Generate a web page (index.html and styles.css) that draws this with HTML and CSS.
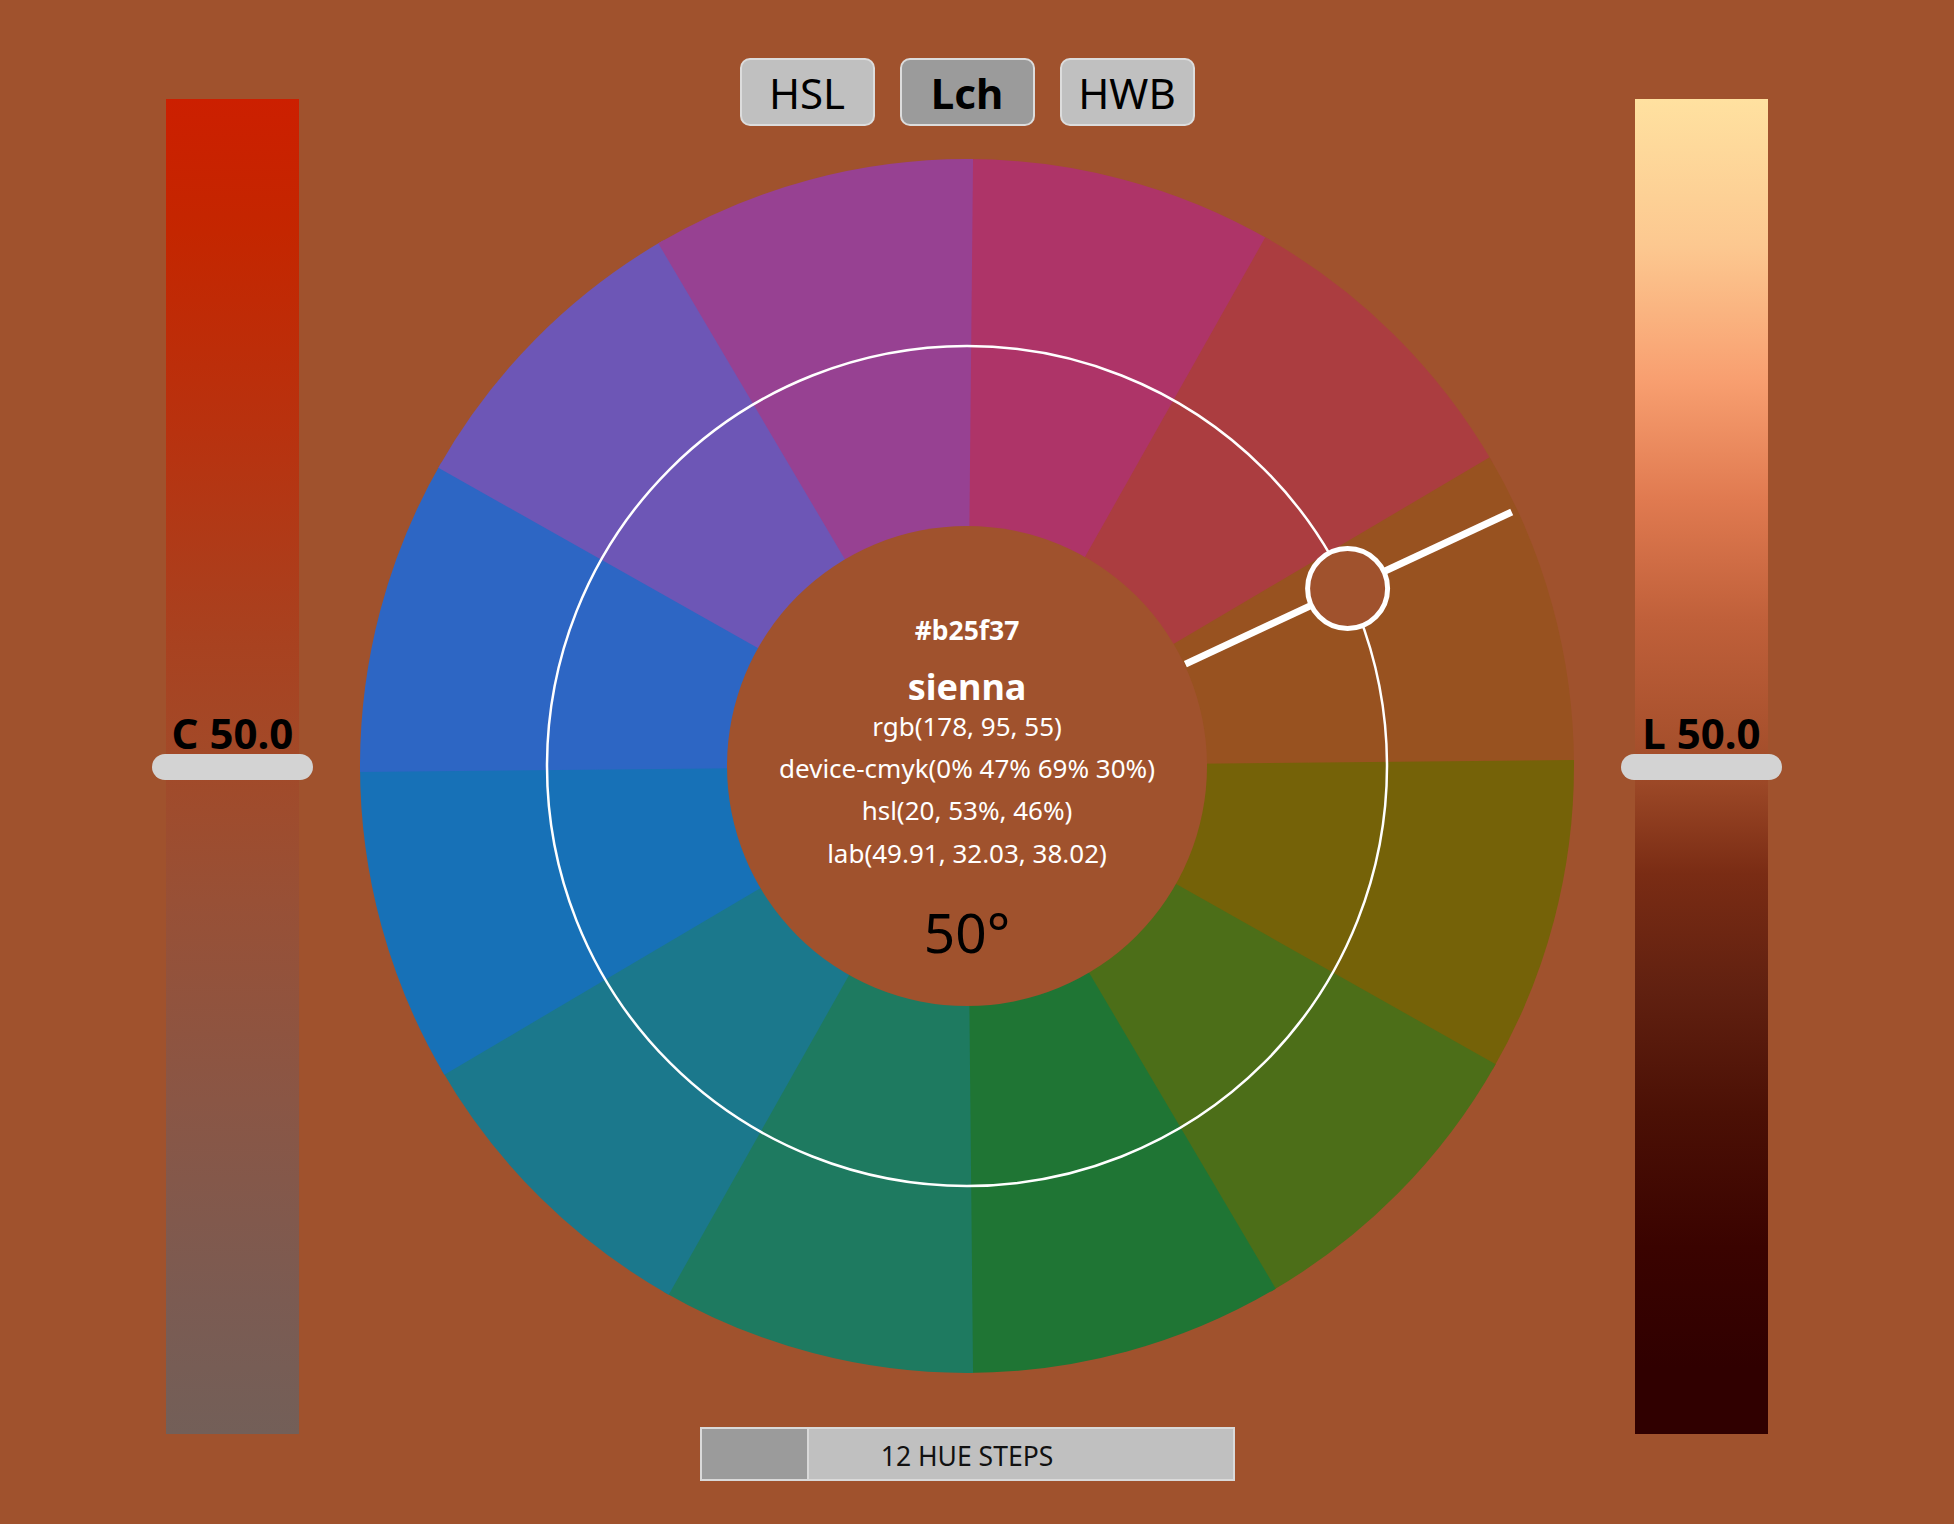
FILE: index.html
```html
<!DOCTYPE html>
<html lang="en">
<head>
<meta charset="utf-8">
<title>Lch color wheel</title>
<link rel="stylesheet" href="styles.css">
</head>
<body>
<div class="app">
  <div class="bar bar-c">
    <div class="bar-label">C 50.0</div>
    <div class="bar-handle"></div>
  </div>

  <main class="center">
    <div class="modes">
      <button class="mode">HSL</button>
      <button class="mode active">Lch</button>
      <button class="mode">HWB</button>
    </div>

    <svg class="wheel" viewBox="-610 -610 1220 1220" xmlns="http://www.w3.org/2000/svg">
      <g class="wedges">
        <path fill="#ae3468" d="M0 0 L-6.04 -606.97 A607 607 0 0 1 303.5 -525.68 Z"/>
        <path fill="#ab3d40" d="M0 0 L298.27 -528.66 A607 607 0 0 1 525.68 -303.5 Z"/>
        <path fill="#985220" d="M0 0 L522.64 -308.73 A607 607 0 0 1 607 0 Z"/>
        <path fill="#756208" d="M0 0 L606.97 -6.04 A607 607 0 0 1 525.68 303.5 Z"/>
        <path fill="#4c6e18" d="M0 0 L528.66 298.27 A607 607 0 0 1 303.5 525.68 Z"/>
        <path fill="#1f7534" d="M0 0 L308.73 522.64 A607 607 0 0 1 0 607 Z"/>
        <path fill="#1e7a60" d="M0 0 L6.04 606.97 A607 607 0 0 1 -303.5 525.68 Z"/>
        <path fill="#1b788c" d="M0 0 L-298.27 528.66 A607 607 0 0 1 -525.68 303.5 Z"/>
        <path fill="#1771b7" d="M0 0 L-522.64 308.73 A607 607 0 0 1 -607 0 Z"/>
        <path fill="#2d66c4" d="M0 0 L-606.97 6.04 A607 607 0 0 1 -525.68 -303.5 Z"/>
        <path fill="#6d56b6" d="M0 0 L-528.66 -298.27 A607 607 0 0 1 -303.5 -525.68 Z"/>
        <path fill="#974192" d="M0 0 L-308.73 -522.64 A607 607 0 0 1 6.04 -606.97 Z"/>
      </g>
      <circle class="core" cx="0" cy="0" r="240"/>
      <circle class="ring" cx="0" cy="0" r="420"/>
      <line class="pointer" x1="218.4" y1="-101.9" x2="544.7" y2="-254"/>
      <circle class="knob" cx="380.6" cy="-177.5" r="40"/>
      <text class="hex" x="0" y="-126">#b25f37</text>
      <text class="name" x="0" y="-66">sienna</text>
      <text class="val" x="0" y="-30">rgb(178, 95, 55)</text>
      <text class="val" x="0" y="12">device-cmyk(0% 47% 69% 30%)</text>
      <text class="val" x="0" y="54">hsl(20, 53%, 46%)</text>
      <text class="val" x="0" y="97">lab(49.91, 32.03, 38.02)</text>
      <text class="deg" x="0" y="187">50°</text>
    </svg>

    <div class="steps">
      <div class="steps-thumb"></div>
      <span class="steps-label">12 HUE STEPS</span>
    </div>
  </main>

  <div class="bar bar-l">
    <div class="bar-label">L 50.0</div>
    <div class="bar-handle"></div>
  </div>
</div>
</body>
</html>
```

FILE: styles.css
```css
html, body {
  margin: 0;
  padding: 0;
}

body {
  background: #a0522d;
  font-family: "Noto Sans", "Open Sans", sans-serif;
  color: #000;
  width: 1954px;
  height: 1524px;
  overflow: hidden;
}

.app {
  width: 1934px;
  height: 1524px;
  box-sizing: border-box;
  padding: 0 166px;
  display: flex;
  justify-content: space-between;
  align-items: flex-start;
}

.bar {
  position: relative;
  width: 133px;
  height: 1335px;
  margin-top: 99px;
  flex: none;
}

.bar-c {
  background: linear-gradient(to bottom,
    #cc1f00 0%,
    #c42600 10%,
    #b8320f 25%,
    #a9411f 40%,
    #a24a29 50%,
    #985036 60%,
    #8a5645 75%,
    #7b5b52 90%,
    #735f58 100%);
}

.bar-l {
  background: linear-gradient(to bottom,
    #ffe1a0 0%,
    #fcc890 11%,
    #f89f70 21%,
    #e07a50 30%,
    #c0603a 39%,
    #a24d2a 50%,
    #7a2c14 58%,
    #602010 67%,
    #4b1005 76%,
    #3a0300 86%,
    #300000 95%,
    #300000 100%);
}

.bar-label {
  position: absolute;
  left: -30px;
  right: -30px;
  bottom: calc(50% + 13px);
  text-align: center;
  font-size: 42px;
  font-weight: 700;
  line-height: 42px;
  color: #000;
}

.bar-handle {
  position: absolute;
  left: -14px;
  top: 50%;
  width: 161px;
  height: 26px;
  margin-top: -13px;
  border-radius: 13px;
  background: #d3d3d3;
}

.center {
  flex: none;
  width: 1336px;
  padding-top: 58px;
  display: flex;
  flex-direction: column;
  align-items: center;
}

.modes {
  display: flex;
  gap: 25px;
}

.mode {
  width: 135px;
  height: 68px;
  padding: 0;
  box-sizing: border-box;
  border: 2px solid #dcdcdc;
  border-radius: 10px;
  background: #c0c0c0;
  font-family: "Noto Sans", "Open Sans", sans-serif;
  font-size: 42px;
  font-weight: 400;
  color: #000;
}

.mode.active {
  background: #9b9b9b;
  font-weight: 700;
}

.wheel {
  display: block;
  width: 1220px;
  height: 1220px;
  margin-top: 30px;
  flex: none;
}

.core {
  fill: #a0522d;
}

.ring {
  fill: none;
  stroke: #ffffff;
  stroke-width: 2.5;
}

.pointer {
  stroke: #ffffff;
  stroke-width: 7;
}

.knob {
  fill: #a0522d;
  stroke: #ffffff;
  stroke-width: 5;
}

.wheel text {
  text-anchor: middle;
  font-family: "Noto Sans", "Open Sans", sans-serif;
  fill: #ffffff;
}

.wheel .hex {
  font-size: 26.5px;
  font-weight: 700;
}

.wheel .name {
  font-size: 36px;
  font-weight: 700;
}

.wheel .val {
  font-size: 26px;
  font-weight: 400;
}

.wheel .deg {
  font-size: 55px;
  fill: #000000;
}

.steps {
  position: relative;
  margin-top: 51px;
  width: 535px;
  height: 54px;
  box-sizing: border-box;
  border: 2px solid #d9d9d9;
  background: #c0c0c0;
  display: flex;
  align-items: center;
  justify-content: center;
  padding-top: 4px;
}

.steps-thumb {
  position: absolute;
  left: 0;
  top: 0;
  bottom: 0;
  width: 105px;
  background: #9b9b9b;
  border-right: 2px solid #d9d9d9;
}

.steps-label {
  position: relative;
  font-size: 26.5px;
  color: #111;
}
```
